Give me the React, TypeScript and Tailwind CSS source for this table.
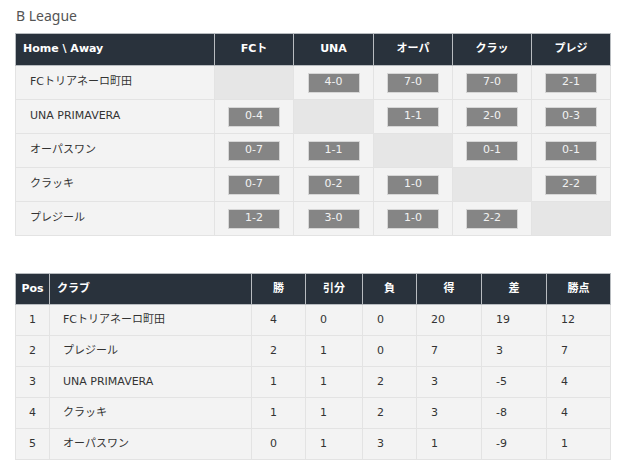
import React from "react";

const teams = ["FCトリアネーロ町田", "UNA PRIMAVERA", "オーパスワン", "クラッキ", "プレジール"];
const heads = ["FCト", "UNA", "オーパ", "クラッ", "プレジ"];
const scores: (string | null)[][] = [
  [null, "4-0", "7-0", "7-0", "2-1"],
  ["0-4", null, "1-1", "2-0", "0-3"],
  ["0-7", "1-1", null, "0-1", "0-1"],
  ["0-7", "0-2", "1-0", null, "2-2"],
  ["1-2", "3-0", "1-0", "2-2", null],
];

const standings = [
  ["1", "FCトリアネーロ町田", "4", "0", "0", "20", "19", "12"],
  ["2", "プレジール", "2", "1", "0", "7", "3", "7"],
  ["3", "UNA PRIMAVERA", "1", "1", "2", "3", "-5", "4"],
  ["4", "クラッキ", "1", "1", "2", "3", "-8", "4"],
  ["5", "オーパスワン", "0", "1", "3", "1", "-9", "1"],
];

const font = { fontFamily: '"DejaVu Sans", "Noto Sans CJK JP", sans-serif' };

export default function App() {
  return (
    <div className="w-[619px] h-[472px] bg-white pl-[15px] pt-[6px]" style={font}>
      <div className="text-[14px] text-[#555] ml-[1px] h-[27px] leading-[20px]" style={{ fontFamily: '"Noto Sans", "Noto Sans CJK JP", sans-serif' }}>
        B League
      </div>
      <table className="border-collapse table-fixed w-[595px]">
        <colgroup>
          <col className="w-[199px]" />
          <col className="w-[79px]" />
          <col className="w-[80px]" />
          <col className="w-[79px]" />
          <col className="w-[79px]" />
          <col className="w-[79px]" />
        </colgroup>
        <thead>
          <tr className="h-[32px] bg-[#29323c] text-white text-[11px] font-bold">
            <th className="text-left pl-[7px] border border-[#b8bcc0]">Home \ Away</th>
            {heads.map((h) => (
              <th key={h} className="text-center border border-[#b8bcc0]">{h}</th>
            ))}
          </tr>
        </thead>
        <tbody>
          {teams.map((t, i) => (
            <tr key={t} className="h-[34px] text-[11px] text-[#333]">
              <td className="pl-[14px] bg-[#f3f3f3] border border-[#e3e3e3]">{t}</td>
              {scores[i].map((s, j) =>
                s === null ? (
                  <td key={j} className="bg-[#e6e6e6] border border-[#e3e3e3]" />
                ) : (
                  <td key={j} className="bg-[#f3f3f3] border border-[#e3e3e3]">
                    <div className="mx-auto w-[52px] h-[20px] bg-[#858585] border border-[#d6d6d6] text-[#f2f2f2] text-[11px] flex items-center justify-center">
                      {s}
                    </div>
                  </td>
                )
              )}
            </tr>
          ))}
        </tbody>
      </table>

      <table className="border-collapse table-fixed w-[595px] mt-[37px]">
        <colgroup>
          <col className="w-[34px]" />
          <col className="w-[202px]" />
          <col className="w-[54px]" />
          <col className="w-[57px]" />
          <col className="w-[54px]" />
          <col className="w-[65px]" />
          <col className="w-[65px]" />
          <col className="w-[64px]" />
        </colgroup>
        <thead>
          <tr className="h-[31px] bg-[#29323c] text-white text-[11px] font-bold">
            <th className="text-center border border-[#b8bcc0]">Pos</th>
            <th className="text-left pl-[7px] border border-[#b8bcc0]">クラブ</th>
            {["勝", "引分", "負", "得", "差", "勝点"].map((h) => (
              <th key={h} className="text-center border border-[#b8bcc0]">{h}</th>
            ))}
          </tr>
        </thead>
        <tbody>
          {standings.map((r) => (
            <tr key={r[0]} className="h-[31px] text-[11px] text-[#333] bg-[#f3f3f3]">
              <td className="text-center border border-[#e3e3e3]">{r[0]}</td>
              <td className="pl-[13px] border border-[#e3e3e3]">{r[1]}</td>
              <td className="pl-[18px] border border-[#e3e3e3]">{r[2]}</td>
              <td className="pl-[14px] border border-[#e3e3e3]">{r[3]}</td>
              <td className="pl-[14px] border border-[#e3e3e3]">{r[4]}</td>
              <td className="pl-[14px] border border-[#e3e3e3]">{r[5]}</td>
              <td className="pl-[14px] border border-[#e3e3e3]">{r[6]}</td>
              <td className="pl-[14px] border border-[#e3e3e3]">{r[7]}</td>
            </tr>
          ))}
        </tbody>
      </table>
    </div>
  );
}
